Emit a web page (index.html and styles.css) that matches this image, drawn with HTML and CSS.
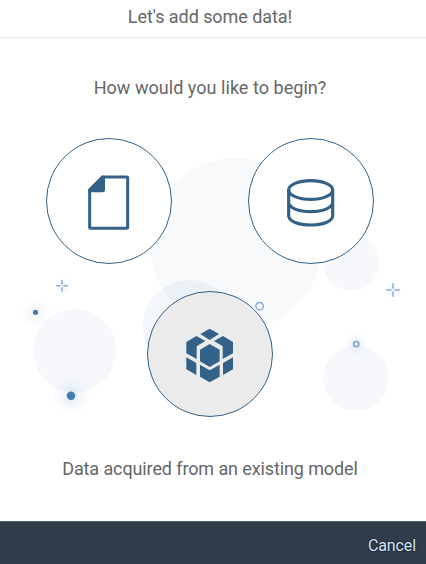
FILE: index.html
```
<!DOCTYPE html>
<html lang="en">
<head>
<meta charset="utf-8">
<title>Let's add some data!</title>
<link rel="stylesheet" href="styles.css">
</head>
<body>
<div class="dialog">
  <header class="header"><h1 class="title">Let's add some data!</h1></header>
  <main class="content">
    <svg class="backdrop" viewBox="0 38 426 483" aria-hidden="true">
      <defs>
        <radialGradient id="glow">
          <stop offset="0" stop-color="#5b8fd0" stop-opacity=".24"/>
          <stop offset=".45" stop-color="#6d9bd8" stop-opacity=".09"/>
          <stop offset="1" stop-color="#8bb0e0" stop-opacity="0"/>
        </radialGradient>
      </defs>
      <circle cx="236" cy="244" r="86" fill="#f7f9fb"/>
      <circle cx="189" cy="326" r="46" fill="#b4c8e0" fill-opacity=".16"/>
      <circle cx="351" cy="263" r="28" fill="#f6f8fc"/>
      <circle cx="355.700" cy="378" r="32.700" fill="#f6f8fc"/>
      <circle cx="74.700" cy="350.700" r="41.700" fill="#f6f8fc"/>
      <circle cx="35.500" cy="312.300" r="18" fill="url(#glow)" opacity=".5"/>
      <circle cx="71" cy="395.800" r="20" fill="url(#glow)" opacity=".9"/>
      <circle cx="356" cy="344" r="13" fill="url(#glow)" opacity=".8"/>
      <circle cx="62" cy="285.700" r="9" fill="url(#glow)" opacity=".6"/>
      <circle cx="393" cy="290" r="10" fill="url(#glow)" opacity=".6"/>
      <circle cx="35.500" cy="312.300" r="2.600" fill="#427cb0"/>
      <circle cx="71" cy="395.800" r="4.200" fill="#427cb0"/>
      <g fill="none" stroke="#86add1" stroke-width="1.500">
        <circle cx="259.600" cy="306.200" r="3.700" fill="#f4f8fc"/>
        <circle cx="356.200" cy="344" r="2.600" fill="#fff" stroke="#73a0c9"/>
        <path d="M56.200 285.700h4.300M63.500 285.700h4.300M62 279.900v4.300M62 287.200v4.300"/>
        <path d="M386.200 290h5.200M394.600 290h5.200M393 283.200v5.200M393 291.600v5.200"/>
      </g>
    </svg>
    <h2 class="question">How would you like to begin?</h2>
    <div class="choices">
      <button class="choice" aria-label="File">
        <svg class="icon" viewBox="39 131 140 140">
          <g transform="translate(40 130) scale(.33333)">
            <path d="M187 141H260Q263 141 263 144V292Q263 295 260 295H152Q149 295 149 292V180Z" fill="none" stroke="#346187" stroke-width="9"/>
            <path d="M186 137H195V180Q195 187 188 187H145V178Z" fill="#346187"/>
          </g>
        </svg>
      </button>
      <button class="choice" aria-label="Data source">
        <svg class="icon" viewBox="241 131 140 140">
          <g transform="translate(240 130) scale(.33333)" fill="none" stroke="#346187" stroke-width="9.500">
            <ellipse cx="212" cy="180" rx="66" ry="28"/>
            <path d="M146 180V257C146 274 176 285 212 285S278 274 278 257V180M146 217C146 234 176 245 212 245S278 234 278 217"/>
          </g>
        </svg>
      </button>
      <button class="choice selected" aria-label="Model">
        <svg class="icon" viewBox="140 284 140 140">
          <g transform="translate(140 285) scale(.33333)" fill="#346187">
            <path d="M209 131l28 16-28 18-28-18z"/>
            <path d="M139 171l30-18 27 15-26 16v38l-31-17z"/>
            <path d="M279 171l-30-18-27 15 26 16v38l31-17z"/>
            <path d="M209 177l30 17v35l-30 17-29-17v-35z"/>
            <path d="M180 239l29 17 30-17v36l-30 17-29-17z"/>
            <path d="M139 217l30 17v36l-30-17z"/>
            <path d="M279 217l-30 17v36l30-17z"/>
          </g>
        </svg>
      </button>
    </div>
    <p class="description">Data acquired from an existing model</p>
  </main>
  <footer class="footer"><button class="cancel">Cancel</button></footer>
</div>
</body>
</html>
```
FILE: styles.css
```
* { box-sizing: border-box; }

body {
  margin: 0;
  background: #fff;
  color: #666;
  font-family: Roboto, "Noto Sans", sans-serif;
}

.dialog {
  display: flex;
  flex-direction: column;
  width: 426px;
  height: 564px;
  overflow: hidden;
}

.header {
  flex: 0 0 38px;
  box-shadow: 0 1px 0 #f5f5f5;
  border-bottom: 1px solid #eee;
  padding-right: 6px;
}

.title, .question, .description {
  margin: 0;
  font-size: 18px;
  font-weight: 400;
  line-height: 24px;
  text-align: center;
  white-space: nowrap;
}

.title {
  padding-top: 5px;
  letter-spacing: -0.06px;
}

.question { letter-spacing: 0.04px; }

.content {
  position: relative;
  flex: 1;
  padding: 38px 6px 0 0;
}

.backdrop {
  position: absolute;
  top: 0;
  left: 0;
  width: 426px;
  height: 483px;
}

.question, .choices, .description { position: relative; }

.choices {
  display: grid;
  grid-template-columns: 126px 126px;
  column-gap: 76px;
  row-gap: 27px;
  justify-content: center;
  margin-top: 38.400px;
}

.choice {
  display: flex;
  align-items: center;
  justify-content: center;
  width: 126px;
  height: 126px;
  padding: 0;
  border: 1px solid #346187;
  border-radius: 50%;
  background: #fff;
}

.selected {
  grid-column: 1 / 3;
  justify-self: center;
  background: #ebebeb;
}

.icon {
  flex: none;
  width: 140px;
  height: 140px;
}

.description {
  margin-top: 39.600px;
  letter-spacing: -0.11px;
}

.footer {
  display: flex;
  flex: 0 0 43px;
  align-items: center;
  justify-content: flex-end;
  padding: 5px 10px 0 0;
  border-top: 1px solid #526577;
  background: #303c49;
}

.cancel {
  padding: 0;
  border: 0;
  background: none;
  color: #d1e8ff;
  font: 400 16px/20px Roboto, "Noto Sans", sans-serif;
  letter-spacing: -0.1px;
  text-shadow: 0 0 2px #000;
}
```
